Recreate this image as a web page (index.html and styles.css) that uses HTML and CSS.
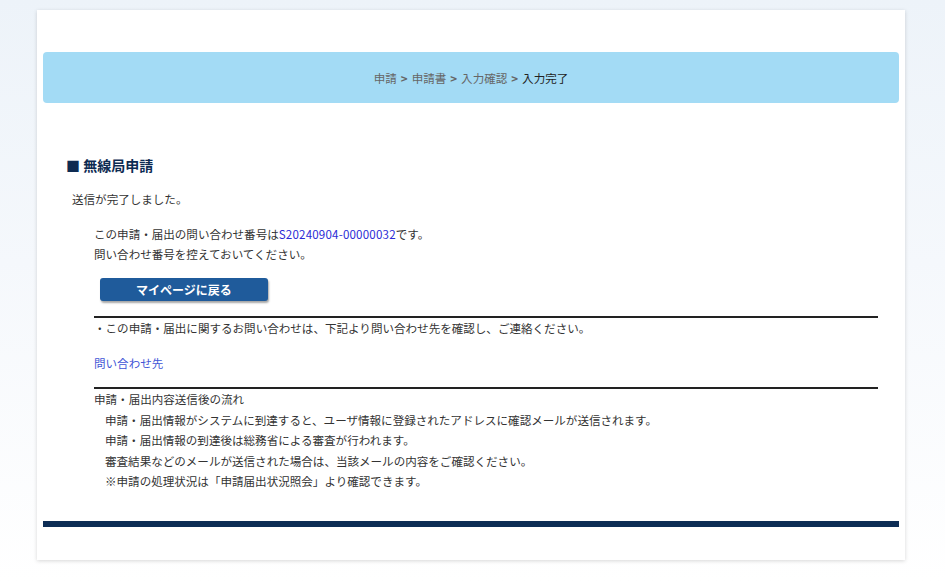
FILE: index.html
```html
<!DOCTYPE html>
<html lang="ja">
<head>
<meta charset="utf-8">
<title>無線局申請</title>
<link rel="stylesheet" href="styles.css">
</head>
<body>
<div class="card">
  <nav class="crumbs">
    <span class="crumb">申請</span><span class="sep">&gt;</span><span class="crumb">申請書</span><span class="sep">&gt;</span><span class="crumb">入力確認</span><span class="sep">&gt;</span><span class="crumb current">入力完了</span>
  </nav>
  <main class="main">
    <h1 class="title">■ 無線局申請</h1>
    <p class="done">送信が完了しました。</p>
    <div class="block">
      <p class="line">この申請・届出の問い合わせ番号は<span class="num">S20240904-00000032</span>です。</p>
      <p class="line">問い合わせ番号を控えておいてください。</p>
      <button class="btn" type="button">マイページに戻る</button>
      <hr class="rule">
      <p class="line">・この申請・届出に関するお問い合わせは、下記より問い合わせ先を確認し、ご連絡ください。</p>
      <a class="contact" href="#">問い合わせ先</a>
      <hr class="rule">
      <p class="line">申請・届出内容送信後の流れ</p>
      <div class="flow">
        <p class="line">申請・届出情報がシステムに到達すると、ユーザ情報に登録されたアドレスに確認メールが送信されます。</p>
        <p class="line">申請・届出情報の到達後は総務省による審査が行われます。</p>
        <p class="line">審査結果などのメールが送信された場合は、当該メールの内容をご確認ください。</p>
        <p class="line">※申請の処理状況は「申請届出状況照会」より確認できます。</p>
      </div>
    </div>
  </main>
  <div class="footbar"></div>
</div>
</body>
</html>
```

FILE: styles.css
```css
* { box-sizing: border-box; }
html, body { margin: 0; padding: 0; }
body {
  min-height: 582px;
  padding-top: 10px;
  background: linear-gradient(to bottom, #edf3f9 0, #f5f8fc 45%, #ffffff 100%);
  font-family: "Noto Sans CJK JP", "Noto Sans", sans-serif;
  font-size: 11.55px;
  color: #333;
}
.card {
  margin-left: 37px;
  width: 868px;
  background: #fff;
  box-shadow: 0 1px 4px rgba(0, 0, 0, 0.16);
  padding: 42px 6px 33px;
}
.crumbs {
  height: 51px;
  background: #a3dbf5;
  border-radius: 4px;
  display: flex;
  align-items: center;
  justify-content: center;
  color: #666;
  font-size: 11.55px;
}
.sep {
  margin: 0 4px;
  color: #666;
  font-weight: 700;
}
.crumb.current { color: #222; }
.main { padding: 0 21px 0 23px; }
.title {
  margin: 52px 0 0;
  font-size: 14px;
  line-height: 20px;
  font-weight: 700;
  color: #0d2b52;
}
.done {
  margin: 14px 0 0 6px;
  line-height: 20.5px;
}
.block {
  margin-top: 14px;
  padding-left: 28px;
  display: flex;
  flex-direction: column;
  align-items: flex-start;
}
.line {
  margin: 0;
  line-height: 20.5px;
}
.num { color: #2b2bd6; letter-spacing: 0.2px; }
.btn {
  margin: 13.5px 0 0 6px;
  width: 168px;
  height: 23px;
  border: none;
  border-radius: 3px;
  background: #1f5b9b;
  color: #fff;
  font-family: inherit;
  font-size: 12px;
  font-weight: 700;
  box-shadow: 1px 2px 2px rgba(0, 0, 0, 0.35);
  padding: 0;
}
.rule {
  align-self: stretch;
  margin: 14.5px 0 0;
  border: none;
  height: 2px;
  background: #222;
}
.contact {
  margin-top: 15px;
  line-height: 20.5px;
  color: #3f55d6;
  text-decoration: none;
}
.contact + .rule { margin-top: 13.5px; }
.flow { padding-left: 11px; }
.footbar {
  margin-top: 29px;
  height: 6px;
  background: #0d2d55;
}
```
